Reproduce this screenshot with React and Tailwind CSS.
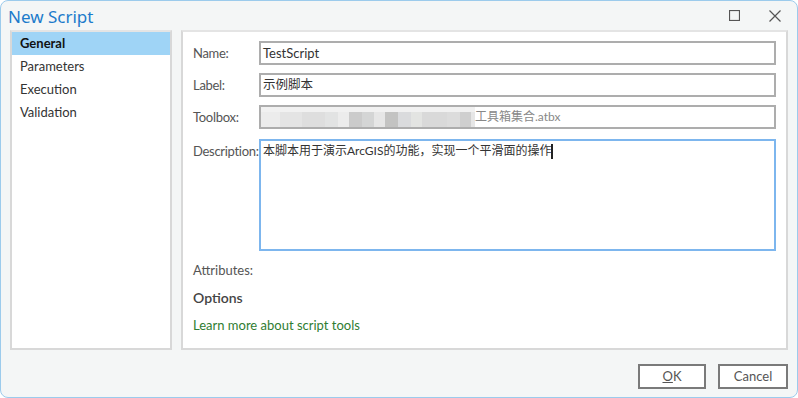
import React from 'react';

const font = { fontFamily: 'Lato, "Noto Sans CJK SC", sans-serif' };

const navItems = ['General', 'Parameters', 'Execution', 'Validation'];

const blurBlocks = [
  ['w-[20px]', 'bg-[#ececec]'],
  ['w-[24px]', 'bg-[#e4e4e4]'],
  ['w-[24px]', 'bg-[#dedede]'],
  ['w-[14px]', 'bg-[#e2e3e3]'],
  ['w-[12px]', 'bg-[#ececec]'],
  ['w-[14px]', 'bg-[#cbcbcb]'],
  ['w-[12px]', 'bg-[#d4d5d5]'],
  ['w-[12px]', 'bg-[#e6e6e6]'],
  ['w-[14px]', 'bg-[#c3c3c2]'],
  ['w-[14px]', 'bg-[#dadbdd]'],
  ['w-[12px]', 'bg-[#e3e4e2]'],
  ['w-[26px]', 'bg-[#d9d9d9]'],
  ['w-[14px]', 'bg-[#dcdcdc]'],
  ['w-[12px]', 'bg-[#cfcfcf]'],
  ['w-[4px]', 'bg-[#e6e6e6]'],
];

const Label = ({ children }) => (
  <div className="w-[66px] shrink-0 pt-[3px] text-[13px] tracking-[-0.3px] whitespace-nowrap text-[#555]">{children}</div>
);

const Field = ({ label, children, className = '' }) => (
  <div className="flex items-start">
    <Label>{label}</Label>
    <div className={`flex-1 border-2 border-[#adadad] bg-white ${className}`}>{children}</div>
  </div>
);

export default function App() {
  return (
    <div style={font} className="w-[798px] h-[398px] bg-[#f4f6f6] border border-[#9ccbec] rounded-[8px] overflow-hidden flex flex-col">
      <div className="h-[29px] flex items-center justify-between pl-[7px] pr-[16px]">
        <span className="text-[17px] text-[#1c7bcb] leading-none mt-[2px]" style={{ fontFamily: '"Noto Sans", sans-serif' }}>New Script</span>
        <div className="flex items-center gap-[29px] text-[#555]">
          <svg width="11" height="11" viewBox="0 0 11 11">
            <rect x="0.5" y="0.5" width="10" height="10" fill="none" stroke="#555" strokeWidth="1.2" />
          </svg>
          <svg width="12" height="12" viewBox="0 0 12 12">
            <path d="M0.5 0.5 L11.5 11.5 M11.5 0.5 L0.5 11.5" stroke="#555" strokeWidth="1.2" />
          </svg>
        </div>
      </div>

      <div className="flex gap-[9px] px-[9px] h-[320px]">
        <div className="w-[162px] bg-white border-2 border-[#d8d8d8] border-t-[#e4e4e4]">
          {navItems.map((item, i) => (
            <div
              key={item}
              className={`h-[23px] flex items-center pl-[8px] text-[13px] ${i === 0 ? 'bg-[#9fd4f6] font-bold text-[#111]' : 'text-[#333]'}`}
            >
              {item}
            </div>
          ))}
        </div>

        <div className="flex-1 bg-white border-2 border-[#d8d8d8] border-t-[#e4e4e4] pl-[10px] pr-[10px] pt-[9px] flex flex-col">
          <div className="flex flex-col gap-[8px]">
            <Field label="Name:" className="h-[24px]">
              <div className="px-[2px] text-[13px] leading-[20px] text-[#333]">TestScript</div>
            </Field>
            <Field label="Label:" className="h-[24px]">
              <div className="px-[2px] text-[12.5px] leading-[20px] text-[#333]">示例脚本</div>
            </Field>
            <Field label="Toolbox:" className="h-[24px]">
              <div className="flex items-stretch h-full">
                <div className="flex flex-col w-[214px]">
                  <div className="h-[5px] bg-[#f1f1f1]" />
                  <div className="flex flex-1">
                    {blurBlocks.map(([w, c], i) => (
                      <div key={i} className={`${w} ${c}`} />
                    ))}
                  </div>
                </div>
                <span className="text-[12px] leading-[20px] text-[#888]">工具箱集合.atbx</span>
              </div>
            </Field>
            <div className="flex items-start mt-[2px]">
              <Label>Description:</Label>
              <div className="flex-1 h-[112px] border-2 border-[#7db6ee] bg-white px-[2px] text-[12px] leading-[20px] text-[#333]">
                本脚本用于演示ArcGIS的功能，实现一个平滑面的操作
                <span className="inline-block w-[2px] h-[15px] bg-[#222] align-middle" />
              </div>
            </div>
          </div>
          <div className="mt-[10px] text-[13px] text-[#555]">Attributes:</div>
          <div className="mt-[6px] text-[14px] font-semibold text-[#444]">Options</div>
          <div className="mt-[8px] text-[13px] text-[#2f7d32]">Learn more about script tools</div>
        </div>
      </div>

      <div className="flex justify-end gap-[12px] pr-[9px] pt-[14px]">
        <button className="w-[68px] h-[25px] border-2 border-[#7a7a7a] bg-white text-[13px] text-[#555]">
          <span className="underline">O</span>K
        </button>
        <button className="w-[70px] h-[25px] border-2 border-[#7a7a7a] bg-white text-[13px] text-[#555]">
          Cancel
        </button>
      </div>
    </div>
  );
}
